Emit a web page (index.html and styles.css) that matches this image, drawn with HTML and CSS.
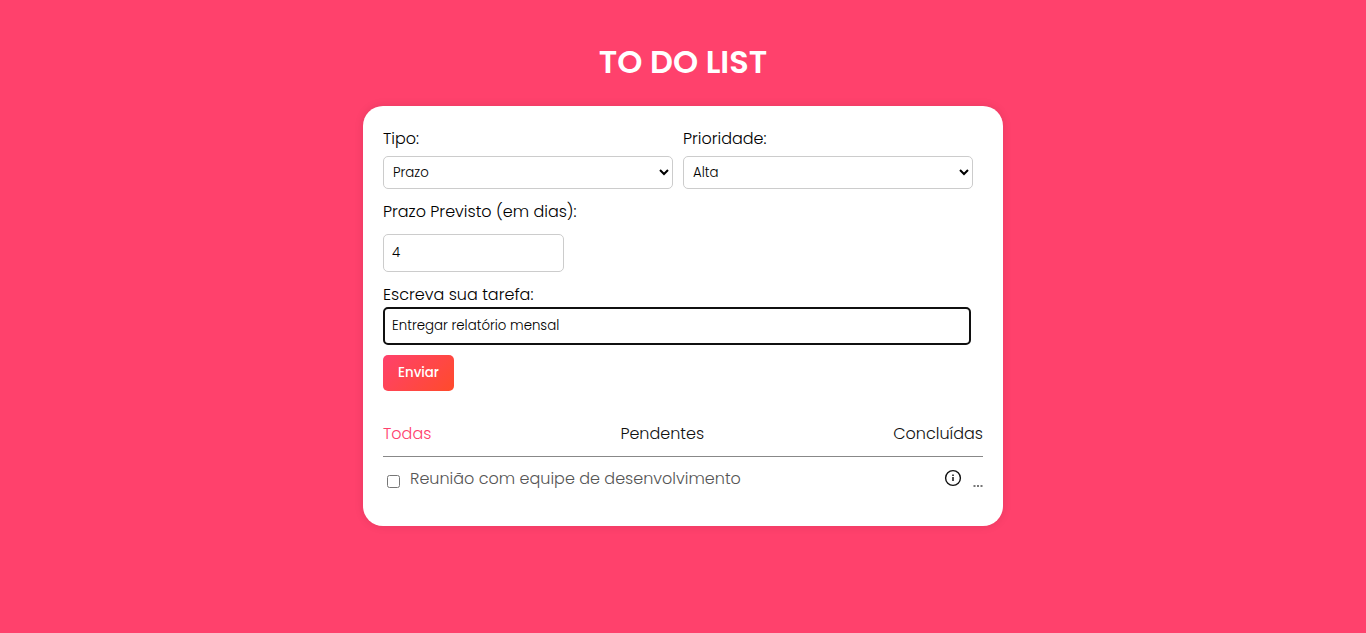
FILE: index.html
```html
<!DOCTYPE html>
<html lang="pt-BR">
<head>
<meta charset="utf-8">
<meta name="viewport" content="width=device-width, initial-scale=1">
<title>To Do List</title>
<link rel="stylesheet" href="styles.css">
</head>
<body>
<h1 class="title">TO DO LIST</h1>
<main class="card">
  <form class="task-form">
    <div class="selects">
      <div class="field">
        <label for="type">Tipo:</label>
        <select id="type" class="control"><option>Prazo</option></select>
      </div>
      <div class="field">
        <label for="priority">Prioridade:</label>
        <select id="priority" class="control"><option>Alta</option></select>
      </div>
    </div>
    <div class="field deadline">
      <label for="days">Prazo Previsto (em dias):</label>
      <input id="days" class="control text-box days" type="text" inputmode="numeric" value="4">
    </div>
    <div class="field task">
      <label for="task">Escreva sua tarefa:</label>
      <input id="task" class="control text-box active" type="text" value="Entregar relatório mensal">
    </div>
    <button class="send" type="button">Enviar</button>
  </form>
  <nav class="filters">
    <a class="filter selected" href="#todas">Todas</a>
    <a class="filter" href="#pendentes">Pendentes</a>
    <a class="filter" href="#concluidas">Concluídas</a>
  </nav>
  <ul class="tasks">
    <li class="item">
      <input id="item-1" class="check" type="checkbox">
      <label class="item-name" for="item-1">Reunião com equipe de desenvolvimento</label>
      <button class="icon-button" type="button" aria-label="Informações">
        <svg class="info" viewBox="0 0 18 18" fill="none" stroke="#111" aria-hidden="true">
          <circle cx="9" cy="9" r="7.4" stroke-width="1.4"/>
          <path d="M9 8v4" stroke-width="1.5"/>
          <path d="M9 5.5v1.4" stroke-width="1.5"/>
        </svg>
      </button>
      <button class="icon-button more" type="button" aria-label="Mais opções">
        <svg class="dots" viewBox="0 0 10 4" fill="#777" aria-hidden="true">
          <rect x="0.5" y="1" width="2" height="2"/><rect x="4" y="1" width="2" height="2"/><rect x="7.5" y="1" width="2" height="2"/>
        </svg>
      </button>
    </li>
  </ul>
</main>
</body>
</html>
```

FILE: styles.css
```css
* {
  box-sizing: border-box;
}

body {
  margin: 0;
  min-height: 100vh;
  padding: 38px 16px;
  background: #ff416c;
  color: #000;
  font: 300 16px/24px Poppins, Inter, sans-serif;
}

.title {
  margin: 0 0 20px;
  color: #fff;
  font-size: 32px;
  font-weight: 600;
  line-height: 48px;
  text-align: center;
}

.card {
  max-width: 640px;
  margin: 0 auto;
  padding: 21px 20px 34px;
  border-radius: 20px;
  background: #fff;
  box-shadow: 0 0 10px rgba(0, 0, 0, 0.1);
}

.task-form {
  display: flex;
  flex-direction: column;
  align-items: flex-start;
}

.selects {
  display: grid;
  grid-template-columns: 1fr 1fr;
  gap: 10px;
  width: 100%;
  padding-right: 10px;
}

.field {
  display: flex;
  flex-direction: column;
  gap: 5px;
}

.control {
  width: 100%;
  height: 33px;
  padding: 0 5px;
  border: 1px solid #ccc;
  border-radius: 5px;
  background: #fff;
  color: #000;
  font-family: inherit;
  font-weight: inherit;
}

.text-box {
  height: 38px;
  padding: 0 8px;
}

.deadline {
  gap: 10px;
  margin-top: 11px;
}

.days {
  width: 181px;
}

.task {
  gap: 0;
  width: 100%;
  margin-top: 11px;
  padding-right: 12px;
}

.active,
.active:focus {
  padding: 0 7px;
  border: 2px solid #101010;
  outline: none;
}

.send {
  height: 36px;
  margin-top: 10px;
  padding: 0 15px;
  border: 0;
  border-radius: 5px;
  background: linear-gradient(135deg, #ff416c, #ff4b2b);
  color: #fff;
  font-family: inherit;
  font-weight: 500;
}

.filters {
  display: flex;
  justify-content: space-between;
  margin-top: 31px;
  padding-bottom: 10px;
  border-bottom: 1px solid #888;
}

.filter {
  color: #111;
  text-decoration: none;
}

.selected {
  color: #ff416c;
}

.tasks {
  margin: 0;
  padding: 9px 0 0;
  list-style: none;
}

.item {
  display: flex;
  align-items: center;
  min-height: 26px;
}

.check {
  width: 13px;
  height: 13px;
  margin: 5px 10px 0 4px;
}

.item-name {
  flex: 1;
  color: #555;
}

.icon-button {
  display: flex;
  padding: 0 0 2px;
  border: 0;
  background: none;
}

.info {
  width: 18px;
  height: 18px;
}

.dots {
  width: 10px;
  height: 4px;
}

.more {
  margin-left: 11px;
  padding: 14px 0 0;
}
```
